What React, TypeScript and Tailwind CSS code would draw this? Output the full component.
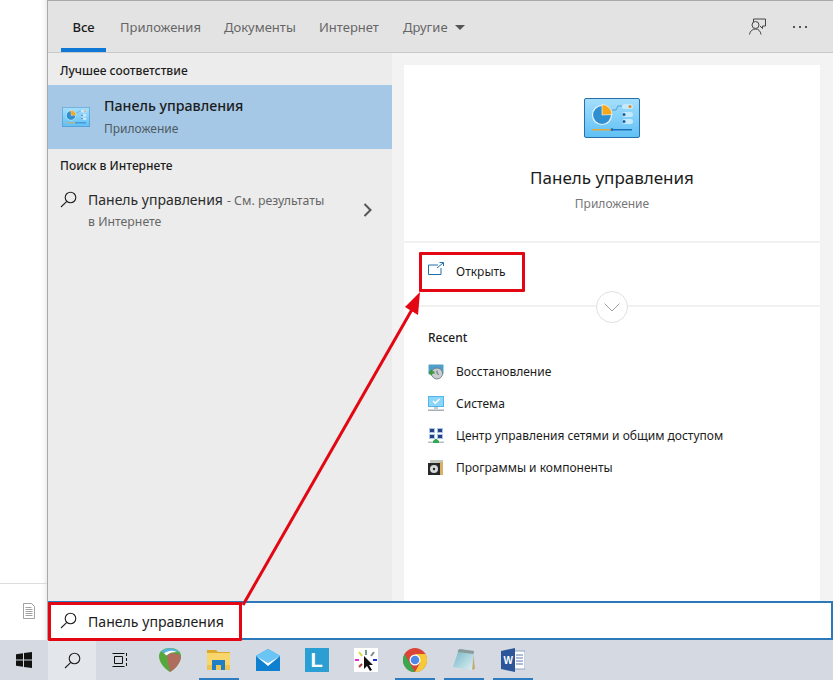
function ControlPanelIcon({ className }: { className?: string }) {
  return (
    <svg viewBox="0 0 56 40" className={className}>
      <defs>
        <linearGradient id="cpBg" x1="0" y1="0" x2="0" y2="1">
          <stop offset="0" stopColor="#a5dffc" />
          <stop offset="1" stopColor="#5fc0f5" />
        </linearGradient>
      </defs>
      <rect x="0.5" y="0.5" width="55" height="39" rx="1.5" fill="url(#cpBg)" stroke="#2a6fa8" />
      <circle cx="18" cy="17" r="9.5" fill="#2f8fd0" stroke="#e6f6ff" strokeWidth="1.2" />
      <path d="M18 17V6.5A10 10 0 0 1 28 16.5Z" fill="#f5a81c" stroke="#fff" strokeWidth="0.6" />
      <path d="M28 12h4l2-4h4" fill="none" stroke="#3a86c0" strokeWidth="0.7" />
      <rect x="38" y="6" width="11" height="5" rx="2.5" fill="#c4e9fd" />
      <circle cx="46" cy="8.500" r="1.500" fill="#dd8a2a" />
      <rect x="38" y="14" width="11" height="5" rx="2.5" fill="#c4e9fd" />
      <circle cx="40" cy="16.500" r="1.500" fill="#1f5f99" />
      <rect x="38" y="21" width="11" height="5" rx="2.5" fill="#c4e9fd" />
      <circle cx="40" cy="23.500" r="1.500" fill="#1f5f99" />
      <rect x="8" y="31" width="19" height="1.500" fill="#e0a93b" />
      <rect x="29" y="31" width="19" height="1.500" fill="#1d6fb8" />
      <circle cx="28" cy="31.700" r="1.400" fill="#1d6fb8" />
    </svg>
  );
}

function SearchGlyph({ className }: { className?: string }) {
  return (
    <svg viewBox="0 0 17 17" fill="none" stroke="#1f1f1f" strokeWidth="1.1" className={className}>
      <circle cx="10.500" cy="6.500" r="5.300" />
      <path d="M6.800 10.300 1 16" />
    </svg>
  );
}

const tabs = [
  { label: 'Приложения', width: 'w-[104px]' },
  { label: 'Документы', width: 'w-[95px]' },
  { label: 'Интернет', width: 'w-[84px]' },
];

const recent = [
  { label: 'Восстановление', icon: <RestoreIcon /> },
  { label: 'Система', icon: <SystemIcon /> },
  { label: 'Центр управления сетями и общим доступом', icon: <NetworkIcon /> },
  { label: 'Программы и компоненты', icon: <ProgramsIcon /> },
];

function RestoreIcon() {
  return (
    <svg viewBox="0 0 16 16" className="w-4 h-4">
      <rect x="0.500" y="0.500" width="15" height="10" rx="1" fill="#4f9fc9" />
      <circle cx="9" cy="9.500" r="5.500" fill="#c9ced2" stroke="#6b7378" strokeWidth="0.800" />
      <path d="M9 6.500v3l2 1" stroke="#444" strokeWidth="0.700" fill="none" />
      <path d="M0.500 8.500 4 5v2.200h2.500v2.600H4V12Z" fill="#3c9a3c" />
    </svg>
  );
}

function SystemIcon() {
  return (
    <svg viewBox="0 0 16 16" className="w-4 h-4">
      <rect x="0" y="0" width="16" height="11" fill="#4fb4ee" />
      <rect x="1" y="1" width="14" height="9" fill="#8ed6f9" />
      <path d="m5 5 2.300 2.300L11.500 3" stroke="#fff" strokeWidth="1.400" fill="none" />
      <rect x="6" y="11" width="4" height="2" fill="#c4ccd2" />
      <rect x="0" y="13.500" width="16" height="1.500" fill="#a5afb6" />
    </svg>
  );
}

function NetworkIcon() {
  return (
    <svg viewBox="0 0 16 16" className="w-4 h-4">
      <rect x="1" y="0" width="6" height="5" fill="#a9c9e0" />
      <rect x="9" y="0" width="6" height="5" fill="#a9c9e0" />
      <rect x="1" y="6" width="6" height="5" fill="#a9c9e0" />
      <rect x="9" y="6" width="6" height="5" fill="#a9c9e0" />
      <rect x="2" y="1" width="4" height="3" fill="#24408f" />
      <rect x="10" y="1" width="4" height="3" fill="#24408f" />
      <rect x="2" y="7" width="4" height="3" fill="#24408f" />
      <rect x="10" y="7" width="4" height="3" fill="#24408f" />
      <rect x="0" y="13.500" width="16" height="1.500" fill="#b8c0c6" />
      <path d="M8 10.500 11 13v2H5v-2Z" fill="#2fa84f" />
    </svg>
  );
}

function ProgramsIcon() {
  return (
    <svg viewBox="0 0 16 16" className="w-4 h-4">
      <rect x="2" y="0" width="13" height="4" fill="#c3c8bd" />
      <rect x="11" y="2" width="4" height="13" fill="#d8b06a" />
      <rect x="0" y="3" width="12" height="12" fill="#26282a" />
      <circle cx="6" cy="9" r="4" fill="#d6d8da" />
      <circle cx="6" cy="9" r="1.200" fill="#26282a" />
    </svg>
  );
}

function TaskSlot({ children, active }: { children: React.ReactNode; active?: boolean }) {
  return (
    <div className="w-[49px] h-10 flex justify-center">
      <div className={`w-10 h-10 pt-[2px] flex items-center justify-center border-b-2 ${active ? 'border-[#2b7cc0]' : 'border-transparent'}`}>
        {children}
      </div>
    </div>
  );
}

export default function App() {
  return (
    <div className="relative w-[833px] h-[680px] overflow-hidden bg-white flex flex-col text-[#1c1c1c] font-['Noto_Sans','Open_Sans',sans-serif]">
      <div className="flex h-[640px]">
        {/* window behind */}
        <div className="w-[47px] flex flex-col shadow-[inset_-6px_0_6px_-6px_rgba(0,0,0,0.15)]">
          <div className="h-[584px] border-b border-[#dcdcdc]" />
          <div className="flex-1 flex items-start justify-end pr-[12px] pt-[19px]">
            <svg viewBox="0 0 12 16" className="w-3 h-4" fill="#fff" stroke="#8a8a8a" strokeWidth="0.800">
              <path d="M0.500 0.500h8l3 3v12h-11Z" />
              <path d="M2.500 4.500h6M2.500 6.500h7M2.500 8.500h7M2.500 10.500h7M2.500 12.500h7" />
            </svg>
          </div>
        </div>

        {/* search flyout */}
        <div className="flex-1 flex flex-col border-l border-[#a9a9a9] border-t border-t-[#a9a9a9]">
          <div className="h-[52px] bg-[#e3e3e3] border-b border-[#c8c8c8] flex items-stretch text-[13px] text-[#666]">
            <div className="w-[45px] ml-[13px] flex items-center justify-center border-b-[4px] border-[#0f77d4] pt-[7px] text-[#1c1c1c] font-medium">
              Все
            </div>
            <div className="flex items-center ml-[14px] pt-[2px]">
              {tabs.map(t => (
                <span key={t.label} className={t.width}>{t.label}</span>
              ))}
              <span className="flex items-center gap-[7px]">
                Другие
                <span className="w-0 h-0 border-x-[5px] border-x-transparent border-t-[5px] border-t-[#555]" />
              </span>
            </div>
            <div className="ml-auto flex items-center gap-[27px] pr-[26px]">
              <svg viewBox="0 0 17 17" className="w-[17px] h-[17px]" fill="none" stroke="#444" strokeWidth="1">
                <path d="M4.500 4V1h12v7h-3v2.500L11 8" />
                <circle cx="6.500" cy="7" r="3.500" />
                <path d="M0.500 16.500c.5-3.500 3-5.500 6-5.500s5 2 5.500 5.500" />
              </svg>
              <span className="flex gap-[4px]">
                <i className="w-[2px] h-[2px] bg-[#555]" />
                <i className="w-[2px] h-[2px] bg-[#555]" />
                <i className="w-[2px] h-[2px] bg-[#555]" />
              </span>
            </div>
          </div>

          <div className="flex-1 flex min-h-0">
            {/* results */}
            <div className="w-[344px] bg-[#ececec]">
              <div className="h-[32px] pl-[12px] flex items-center text-xs font-medium pt-[3px]">Лучшее соответствие</div>
              <div className="h-[64px] bg-[#a5c8e6] flex items-center">
                <ControlPanelIcon className="w-[28px] h-[20px] ml-[14px] shrink-0" />
                <div className="ml-[14px] mt-[1px]">
                  <div className="text-[14.2px] font-medium leading-[22px]">Панель управления</div>
                  <div className="text-xs text-[#4f5a63] leading-[24px]">Приложение</div>
                </div>
              </div>
              <div className="h-[33px] pl-[12px] flex items-center text-xs font-medium">Поиск в Интернете</div>
              <div className="flex items-start">
                <SearchGlyph className="w-[17px] h-[17px] ml-[12px] mt-[9px] shrink-0" />
                <div className="ml-[11px] mt-[8px] w-[240px] text-[12.3px] leading-[21px] text-[#666] whitespace-nowrap">
                  <div className="flex items-baseline gap-[4px]">
                    <span className="text-sm text-[#2b2b2b]">Панель управления</span>
                    <span>- См. результаты</span>
                  </div>
                  <div>в Интернете</div>
                </div>
                <svg viewBox="0 0 9 14" className="w-[9px] h-[14px] ml-[35px] mt-[21px]" fill="none" stroke="#555" strokeWidth="2">
                  <path d="m1.500 1 6 6-6 6" />
                </svg>
              </div>
            </div>

            {/* preview */}
            <div className="flex-1 bg-[#f3f3f3] pl-[12px] pr-[13px] pt-[12px]">
              <div className="h-full bg-white flex flex-col">
                <div className="h-[178px] border-b-2 border-[#f1f1f1] flex flex-col items-center">
                  <ControlPanelIcon className="w-[56px] h-[40px] mt-[33px]" />
                  <div className="mt-[27px] text-[17px] leading-[26px]">Панель управления</div>
                  <div className="mt-[4px] text-xs leading-[18px] text-[#777]">Приложение</div>
                </div>
                <div className="relative h-[64px] border-b-2 border-[#f1f1f1] pl-[24px] pt-[19px] flex items-start">
                  <svg viewBox="0 0 16 13" className="w-4 h-[13px]" fill="none" stroke="#1f6fb0" strokeWidth="1">
                    <path d="M10 3H0.500v9.500H13V6M9 6l6-5M11.500 0.500H15.500V4" />
                  </svg>
                  <span className="ml-[12px] text-xs leading-[20px]">Открыть</span>
                  <div className="absolute left-[192px] top-[48px] w-8 h-8 rounded-full bg-white border border-[#e0e0e0] flex items-center justify-center">
                    <svg viewBox="0 0 16 9" className="w-4 h-[9px]" fill="none" stroke="#a0a0a0" strokeWidth="1">
                      <path d="m0.500 0.500 7.500 7.500 7.500-7.500" />
                    </svg>
                  </div>
                </div>
                <div className="pl-[24px] pt-[22px] text-xs">
                  <div className="leading-[18px] font-medium">Recent</div>
                  <div className="mt-[9px] flex flex-col">
                    {recent.map(r => (
                      <div key={r.label} className="h-8 flex items-center gap-[12px]">
                        {r.icon}
                        <span>{r.label}</span>
                      </div>
                    ))}
                  </div>
                </div>
              </div>
            </div>
          </div>

          {/* search box */}
          <div className="h-[39px] bg-white border-2 border-[#2b79b8] border-l-0 flex items-center pl-[12px] text-[14.1px]">
            <SearchGlyph className="w-[17px] h-[17px] shrink-0" />
            <span className="ml-[11px] mt-[2px]">Панель управления</span>
          </div>
        </div>
      </div>

      {/* taskbar */}
      <div className="h-10 bg-[#d5dae2] flex items-center">
        <div className="w-12 flex justify-center">
          <svg viewBox="0 0 16 16" className="w-4 h-4" fill="#111">
            <path d="M0 2.300 7 1.300V7.500H0ZM8 1.100 16 0V7.500H8ZM0 8.500H7V14.700L0 13.700ZM8 8.500H16V16L8 14.900Z" />
          </svg>
        </div>
        <div className="w-12 h-10 bg-[#e3e6eb] flex items-center justify-center">
          <SearchGlyph className="w-[17px] h-[17px]" />
        </div>
        <div className="w-[48px] flex justify-center">
          <svg viewBox="0 0 16 16" className="w-4 h-4" fill="none" stroke="#111" strokeWidth="1">
            <path d="M2.500 4.500h8v7h-8ZM0.500 1.500h12M0.500 14.500h12M14.500 1v3M14.500 6v3M14.500 11v3" />
          </svg>
        </div>
        <div className="flex ml-[1px]">
          <TaskSlot>
            <svg viewBox="0 0 24 26" className="w-6 h-[26px]">
              <path d="M1 9C1 4 6 1 12 1s11 3 11 8c0 7-6 13-11 16C7 22 1 16 1 9Z" fill="#57a83c" />
              <path d="M9 8C13 5 20 6 23 9c0 7-6 13-11 16-1-6-3-12-3-17Z" fill="#b06c5c" />
              <path d="M3 5C7 0 18 0 22 6 17 3 11 3 8 8 7 6 5 5 3 5Z" fill="#5ab5dc" />
              <path d="M6 6.500C10 3 15 3 19 5 14 5 11 6 8.500 8.500Z" fill="#fff" />
            </svg>
          </TaskSlot>
          <TaskSlot active>
            <svg viewBox="0 0 23 22" className="w-[23px] h-[22px]">
              <path d="M0 1h9l2 2h12v3H0Z" fill="#dca92c" />
              <rect x="0" y="4" width="23" height="17" fill="#f9d66b" />
              <rect x="0" y="16" width="23" height="5" fill="#eec552" />
              <path d="M5 11h13v10h-4v-5H9v5H5Z" fill="#1f7fc4" />
            </svg>
          </TaskSlot>
          <TaskSlot>
            <svg viewBox="0 0 24 22" className="w-6 h-[22px]">
              <path d="M0 7 12 0l12 7v15H0Z" fill="#0f7fd0" />
              <path d="M0 7 12 14 24 7v-.500L12 0 0 6.500Z" fill="#6ac5f5" />
              <path d="M0 7 12 14 24 7 12 17 0 7Z" fill="#ffffff" />
            </svg>
          </TaskSlot>
          <TaskSlot>
            <div className="w-6 h-6 bg-[#2b9fd4] flex items-center justify-center text-white font-bold text-[20px] leading-none font-['Liberation_Sans',sans-serif]">
              L
            </div>
          </TaskSlot>
          <TaskSlot>
            <svg viewBox="0 0 24 24" className="w-6 h-6">
              <rect width="24" height="24" fill="#fff" />
              <path d="M12 2v5" stroke="#6d9c8f" strokeWidth="2" />
              <path d="m5 4 3 4" stroke="#d7d94a" strokeWidth="2" />
              <path d="m20 4-3 4" stroke="#7f8f8a" strokeWidth="2" />
              <path d="M1 12h4" stroke="#e62bd1" strokeWidth="2" />
              <path d="M19 12h4" stroke="#2233cc" strokeWidth="2" />
              <path d="m5 19 3-3" stroke="#b23a3a" strokeWidth="2" />
              <path d="M10 8v13l3-3 3 5 2-1-3-5h4Z" fill="#111" />
            </svg>
          </TaskSlot>
          <TaskSlot active>
            <svg viewBox="0 0 24 24" className="w-6 h-6">
              <circle cx="12" cy="12" r="12" fill="#db4437" />
              <path d="M12 24A12 12 0 0 1 1.600 6L7 15.500 12 24Z" fill="#3ba84f" />
              <path d="M12 24A12 12 0 0 0 22.400 6H12l5 9Z" fill="#f7c936" />
              <circle cx="12" cy="12" r="5.500" fill="#fff" />
              <circle cx="12" cy="12" r="4.300" fill="#4f89e8" />
            </svg>
          </TaskSlot>
          <TaskSlot active>
            <svg viewBox="0 0 24 24" className="w-6 h-6">
              <defs>
                <linearGradient id="padFill" x1="0" y1="0" x2="1" y2="1">
                  <stop offset="0" stopColor="#6fb4c4" />
                  <stop offset="1" stopColor="#dff1f3" />
                </linearGradient>
              </defs>
              <path d="M21 3 23 21 19 22Z" fill="#c8a878" />
              <path d="M7 1 22 3 20 22 1 19Z" fill="url(#padFill)" />
              <path d="M7 1 22 3 21.500 6 5.500 4Z" fill="#8a9a9a" />
            </svg>
          </TaskSlot>
          <TaskSlot active>
            <svg viewBox="0 0 24 24" className="w-6 h-6">
              <rect x="9" y="3" width="15" height="18" fill="#fff" stroke="#8fa3c4" />
              <path d="M15 7h7M15 10h7M15 13h7M15 16h7" stroke="#5a7ab0" />
              <path d="M0 3 14 0v24L0 21Z" fill="#2b579a" />
              <text x="2.500" y="16" fontSize="10" fontWeight="700" fill="#fff" fontFamily="Liberation Sans, sans-serif">W</text>
            </svg>
          </TaskSlot>
        </div>
      </div>

      {/* annotation: red boxes and arrow */}
      <div className="absolute left-[419px] top-[252px] w-[106px] h-[40px] border-[3px] border-[#e30613] rounded-[1px]" />
      <div className="absolute left-[48px] top-[602px] w-[194px] h-[39px] border-[3px] border-[#e30613] rounded-[1px]" />
      <svg viewBox="0 0 833 680" className="absolute inset-0 w-[833px] h-[680px] pointer-events-none">
        <path d="M243 605 414 306" stroke="#e30613" strokeWidth="3" fill="none" />
        <path d="M420 292 405 307 418 315Z" fill="#e30613" />
      </svg>
    </div>
  );
}
